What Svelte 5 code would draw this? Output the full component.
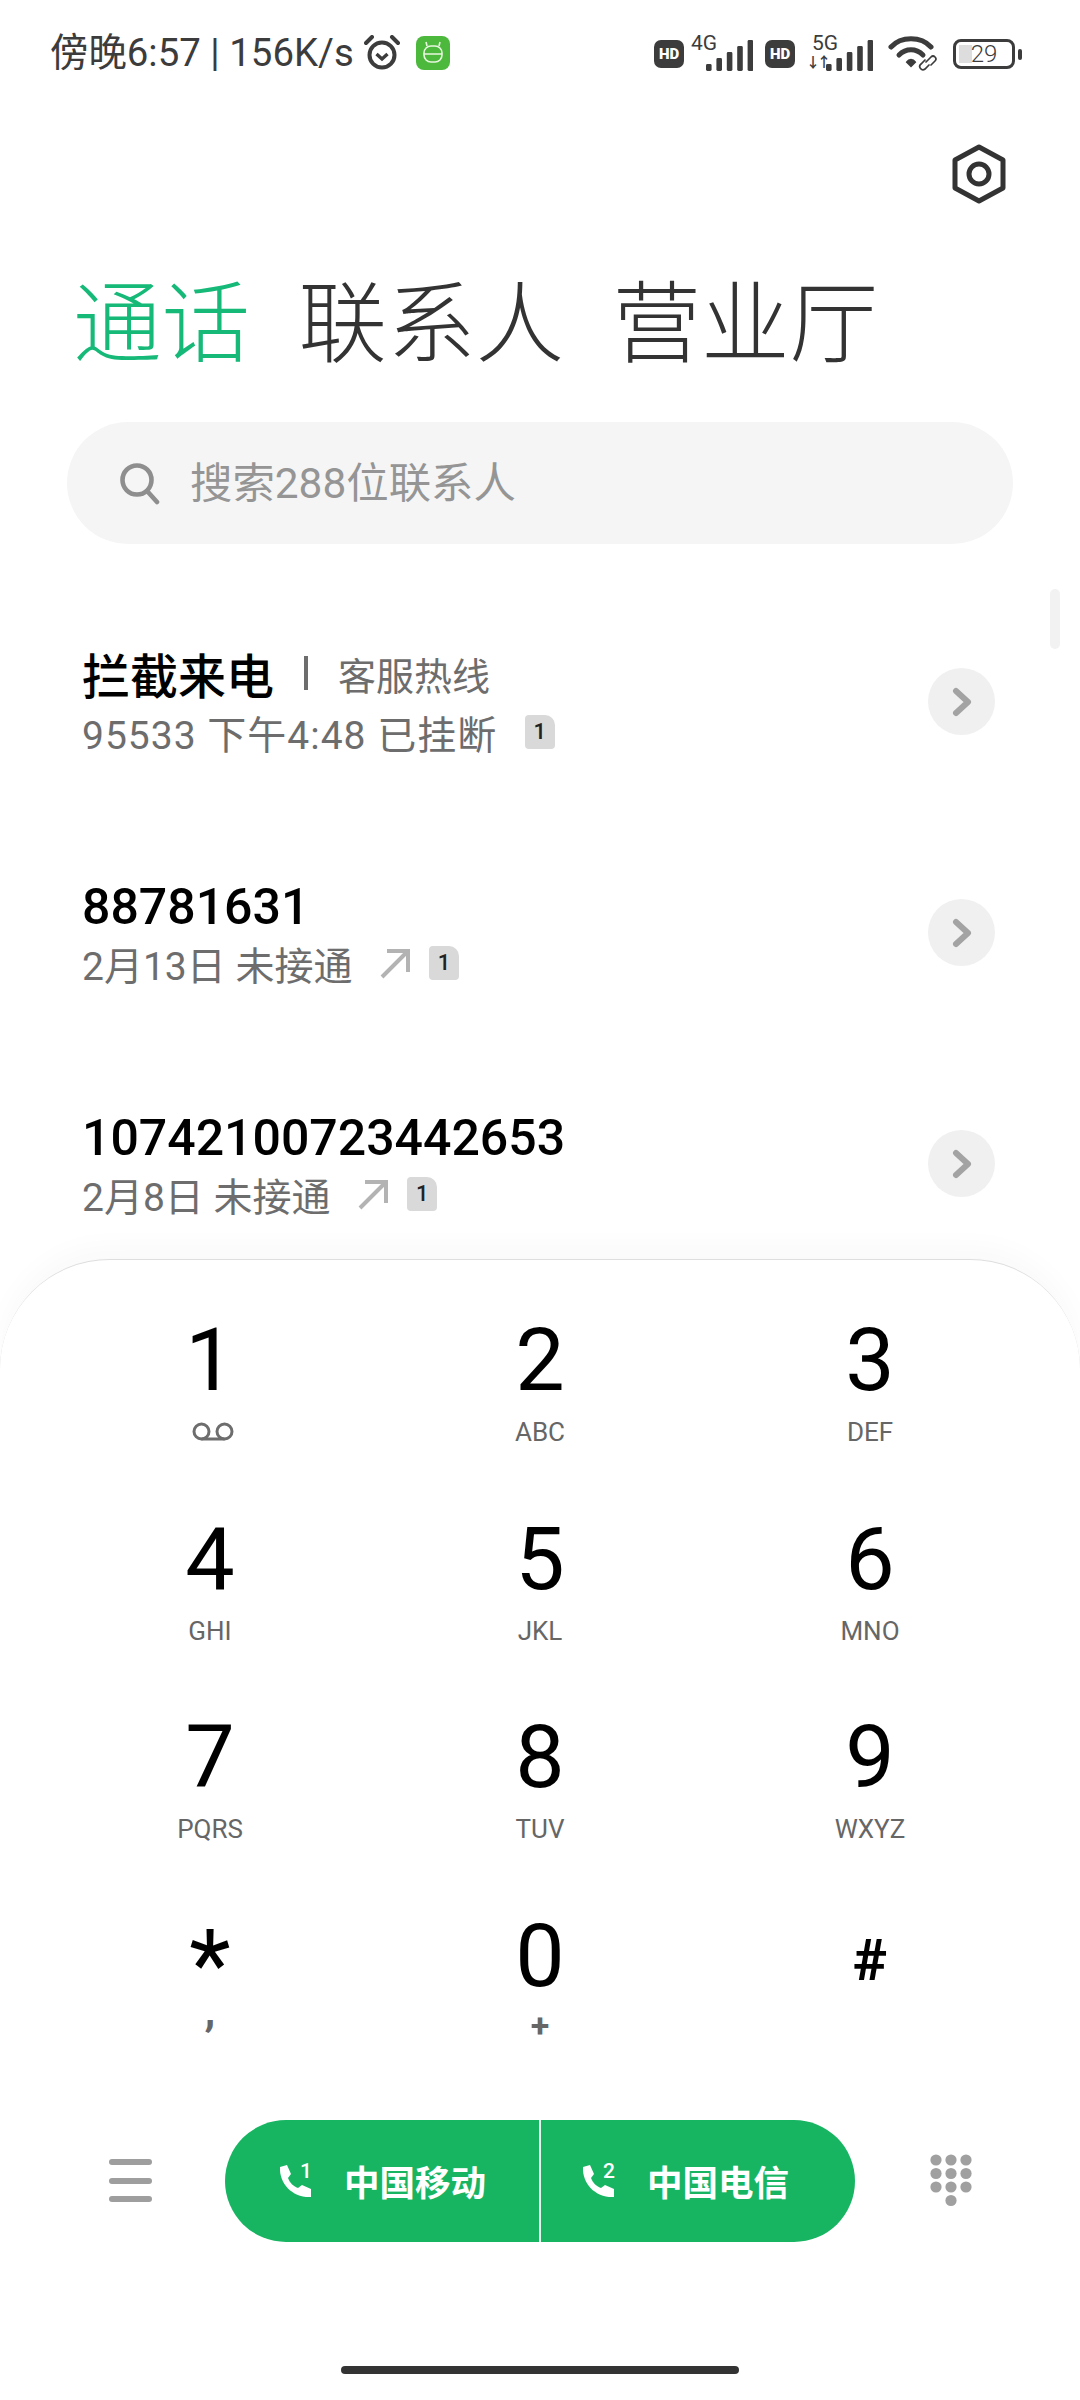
<script>
  const calls = [
    { name: "88781631", date: "2月13日 未接通" },
    { name: "10742100723442653", date: "2月8日 未接通" },
  ];
  const keys = [
    ["1", ""], ["2", "ABC"], ["3", "DEF"],
    ["4", "GHI"], ["5", "JKL"], ["6", "MNO"],
    ["7", "PQRS"], ["8", "TUV"], ["9", "WXYZ"],
  ];
  const signalBars = [0, 1, 2, 3, 4];
</script>

{#snippet sim()}
  <span class="sim">1</span>
{/snippet}

{#snippet chevron()}
  <span class="more">
    <svg width="22" height="30" viewBox="0 0 22 30"><path d="M5 4 L17 15 L5 26" fill="none" stroke="#a3a3a3" stroke-width="6" stroke-linecap="round" stroke-linejoin="round" /></svg>
  </span>
{/snippet}

{#snippet arrow()}
  <svg class="arrow" width="32" height="32" viewBox="0 0 32 32"><path d="M3 30 L29 4 M8 4 H29 V25" fill="none" stroke="#b3b3b3" stroke-width="4" /></svg>
{/snippet}

{#snippet bars()}
  <svg class="bars" width="48" height="32" viewBox="0 0 48 32">
    {#each signalBars as b}
      <rect x={b * 10.4 + 1} y={25 - b * 6} width="5.6" height={7 + b * 6} rx="1.4" fill="#3c3c3c" />
    {/each}
  </svg>
{/snippet}

{#snippet hd()}
  <span class="hd">HD</span>
{/snippet}

{#snippet phone(n)}
  <span class="phone">
    <svg width="34" height="34" viewBox="0 0 34 34"><path d="M2 3 L9 1 L13 10 L10 14 C12 19 15 22 20 24 L24 21 L33 25 L33 33 C15 34 1 20 2 3 Z" fill="#fff" /></svg>
    <span class="sup">{n}</span>
  </span>
{/snippet}

<div class="page">
  <div class="status">
    <div class="status-left">
      <span class="clock">傍晚6:57 | 156K/s</span>
      <svg width="36" height="36" viewBox="0 0 36 36" fill="none" stroke="#3c3c3c" stroke-width="4">
        <circle cx="18" cy="20" r="12.5" />
        <path d="M12.5 19 L18 24 L23.5 19" stroke-width="3.4" />
        <path d="M2 8 L8 2 M34 8 L28 2" stroke-linecap="round" />
      </svg>
      <span class="appicon">
        <svg width="24" height="26" viewBox="0 0 24 26" fill="none" stroke="#e8f6df" stroke-width="1.6">
          <rect x="3" y="6" width="18" height="16" rx="7" />
          <path d="M6 6 L5 2 M18 6 L19 2 M3 14 H21" />
        </svg>
      </span>
    </div>
    <div class="status-right">
      {@render hd()}
      <span class="net"><span class="net-label">4G</span>{@render bars()}</span>
      {@render hd()}
      <span class="net net-5g"><span class="net-label">5G</span><span class="updown">↓↑</span>{@render bars()}</span>
      <svg class="wifi" width="50" height="36" viewBox="0 0 50 36" fill="none" stroke="#3c3c3c" stroke-width="5" stroke-linecap="round">
        <path d="M3 11 C13 0 33 0 43 11" />
        <path d="M11 19 C18 12 28 12 35 19" />
        <path d="M23 30 L19 26 C21 23 25 23 27 26 Z" fill="#3c3c3c" stroke-width="2" />
        <path d="M38 26 L43 21 A2.6 2.6 0 0 1 47 25 L43 29 M37 24 L33 28 A2.6 2.6 0 0 0 37 33 L41 29" stroke-width="1.7" />
      </svg>
      <span class="battery">
        <span class="battery-body"><span class="battery-fill"></span><span class="battery-num">29</span></span>
        <span class="battery-tip"></span>
      </span>
    </div>
  </div>

  <div class="toolbar">
    <svg width="56" height="60" viewBox="0 0 56 60" fill="none" stroke="#333" stroke-width="5" stroke-linejoin="round">
      <path d="M28 3 L52 16 V44 L28 57 L4 44 V16 Z" />
      <circle cx="28" cy="30" r="10" />
    </svg>
  </div>

  <div class="tabs">
    <span class="tab active">通话</span>
    <span class="tab">联系人</span>
    <span class="tab">营业厅</span>
  </div>

  <div class="search">
    <svg width="42" height="44" viewBox="0 0 42 44" fill="none" stroke="#8e8e8e" stroke-width="4.6" stroke-linecap="round">
      <circle cx="18" cy="19" r="14.5" />
      <path d="M29 31 L38 41" />
    </svg>
    <span class="search-text">搜索288位联系人</span>
  </div>

  <div class="list">
    <div class="scroll-thumb"></div>
    <div class="row">
      <div class="row-text">
        <div class="title">
          <b>拦截来电</b><span class="sep"></span><span class="tag">客服热线</span>
        </div>
        <div class="sub wide">95533 下午4:48 已挂断 {@render sim()}</div>
      </div>
      {@render chevron()}
    </div>
    {#each calls as call}
      <div class="row">
        <div class="row-text">
          <div class="title number"><b>{call.name}</b></div>
          <div class="sub">{call.date} {@render arrow()}{@render sim()}</div>
        </div>
        {@render chevron()}
      </div>
    {/each}
  </div>

  <div class="sheet">
    <div class="keypad">
      {#each keys as key}
        <div class="key">
          <div class="digit">{key[0]}</div>
          <div class="letters">
            {#if key[0] === "1"}
              <svg class="voicemail" width="42" height="20" viewBox="0 0 42 20" fill="none" stroke="#6d6d6d" stroke-width="3">
                <circle cx="9.5" cy="9.5" r="7.5" /><circle cx="32.5" cy="9.5" r="7.5" /><path d="M9.5 17 H32.5" />
              </svg>
            {:else}
              {key[1]}
            {/if}
          </div>
        </div>
      {/each}
      <div class="key">
        <div class="digit star">*</div>
        <div class="letters comma">,</div>
      </div>
      <div class="key">
        <div class="digit">0</div>
        <div class="letters plus">+</div>
      </div>
      <div class="key">
        <div class="digit hash">#</div>
        <div class="letters"></div>
      </div>
    </div>

    <div class="actions">
      <div class="side side-left">
        <div class="menu"><i></i><i></i><i></i></div>
      </div>
      <div class="call">
        <div class="call-half">{@render phone(1)}<span>中国移动</span></div>
        <div class="call-half">{@render phone(2)}<span>中国电信</span></div>
      </div>
      <div class="side side-right">
        <svg width="42" height="54" viewBox="0 0 42 54" fill="#a0a0a0">
          {#each [0, 1, 2] as r}
            {#each [0, 1, 2] as c}
              <circle cx={6 + c * 15} cy={6 + r * 13.5} r="5.6" />
            {/each}
          {/each}
          <circle cx="21" cy="46.5" r="5.6" />
        </svg>
      </div>
    </div>

    <div class="home-wrap"><div class="home"></div></div>
  </div>
</div>

<style>
  :global(body) {
    background: #fff;
  }
  .page {
    width: 1080px;
    height: 2400px;
    display: flex;
    flex-direction: column;
    overflow: hidden;
    background: #fff;
    font-family: Roboto, "Noto Sans CJK SC", sans-serif;
  }
  .status {
    height: 106px;
    flex: none;
    display: flex;
    justify-content: space-between;
    align-items: center;
    padding: 0 58px 0 50px;
    box-sizing: border-box;
    color: #3c3c3c;
  }
  .status-left {
    display: flex;
    align-items: center;
    gap: 10px;
  }
  .clock {
    font-size: 38.4px;
    line-height: 44px;
    white-space: nowrap;
  }
  .appicon {
    width: 34px;
    height: 34px;
    margin-left: 6px;
    border-radius: 8px;
    background: #4cb83c;
    display: flex;
    align-items: center;
    justify-content: center;
  }
  .status-right {
    display: flex;
    align-items: center;
    gap: 12px;
    margin-top: 2px;
  }
  .hd {
    width: 30px;
    height: 28px;
    border-radius: 7px;
    background: #3c3c3c;
    color: #fff;
    font-size: 15px;
    font-weight: 900;
    line-height: 28px;
    text-align: center;
  }
  .net {
    display: flex;
    align-items: flex-end;
    position: relative;
    width: 62px;
    height: 34px;
    margin-left: -5px;
    justify-content: flex-end;
  }
  .net-5g {
    width: 66px;
    margin-left: 0;
  }
  .net-label {
    position: absolute;
    left: 0;
    top: -6px;
    font-size: 21px;
    line-height: 24px;
  }
  .net-5g .net-label {
    left: 5px;
  }
  .updown {
    position: absolute;
    left: -1px;
    bottom: 2px;
    font-size: 14px;
    line-height: 14px;
    font-weight: 700;
    letter-spacing: -3px;
  }
  .bars {
    display: block;
  }
  .wifi {
    margin-left: 3px;
  }
  .battery {
    display: flex;
    align-items: center;
    gap: 3px;
    margin-left: 3px;
  }
  .battery-body {
    width: 56px;
    height: 24px;
    border: 3px solid #3c3c3c;
    border-radius: 8px;
    position: relative;
    display: block;
  }
  .battery-fill {
    position: absolute;
    left: 3px;
    top: 3px;
    bottom: 3px;
    width: 13px;
    background: #ddd;
  }
  .battery-num {
    position: absolute;
    inset: 0;
    text-align: center;
    font-size: 24px;
    line-height: 24px;
    font-weight: 300;
  }
  .battery-tip {
    width: 4px;
    height: 11px;
    border-radius: 2px;
    background: #3c3c3c;
  }
  .toolbar {
    flex: none;
    height: 60px;
    margin-top: 38px;
    padding-right: 73px;
    display: flex;
    justify-content: flex-end;
  }
  .tabs {
    flex: none;
    margin-top: 66px;
    padding-left: 73px;
    display: flex;
    gap: 48.5px;
    font-size: 88.5px;
    line-height: 110px;
    font-weight: 300;
    color: #333;
  }
  .tab.active {
    color: #17b978;
  }
  .search {
    flex: none;
    margin: 42px 67px 0;
    height: 122px;
    border-radius: 61px;
    background: #f5f5f5;
    display: flex;
    align-items: center;
    padding-left: 52px;
    gap: 29px;
    font-size: 42.4px;
    color: #959595;
  }
  .search-text {
    padding-bottom: 8px;
  }
  .list {
    flex: 1;
    min-height: 0;
    position: relative;
    padding-top: 93px;
    overflow: hidden;
  }
  .scroll-thumb {
    position: absolute;
    right: 20px;
    top: 45px;
    width: 10px;
    height: 60px;
    border-radius: 5px;
    background: #f2f2f2;
  }
  .row {
    height: 231px;
    display: flex;
    align-items: flex-start;
    justify-content: space-between;
    padding: 0 85px 0 82px;
    box-sizing: border-box;
  }
  .row-text {
    padding-top: 6px;
  }
  .title {
    display: flex;
    align-items: center;
    height: 60px;
    white-space: nowrap;
  }
  .title b {
    font-size: 48px;
    font-weight: 500;
    color: #000;
  }
  .title.number {
    padding-top: 6px;
    box-sizing: border-box;
  }
  .title.number b {
    font-size: 50px;
  }
  .sep {
    width: 4px;
    height: 34px;
    margin: 0 30px;
    background: #6d6d6d;
  }
  .tag {
    font-size: 38px;
    color: #6d6d6d;
  }
  .sub {
    display: flex;
    align-items: center;
    height: 58px;
    font-size: 39px;
    color: #6d6d6d;
    white-space: pre;
  }
  .sub.wide {
    letter-spacing: 1px;
  }
  .arrow {
    margin-left: 17px;
    margin-right: 18px;
  }
  .sim {
    width: 30px;
    height: 34px;
    margin-left: 17px;
    background: #d9d9d9;
    border-radius: 4px 10px 4px 4px;
    color: #222;
    font-size: 22px;
    font-weight: 500;
    line-height: 34px;
    letter-spacing: 0;
    text-align: center;
  }
  :global(.arrow) + .sim {
    margin-left: 0;
  }
  .more {
    width: 67px;
    height: 67px;
    margin-top: 31px;
    border-radius: 50%;
    background: #f0f0f0;
    display: flex;
    align-items: center;
    justify-content: center;
  }
  .sheet {
    flex: none;
    height: 1141px;
    box-sizing: border-box;
    border-top: 1.5px solid #dedede;
    border-radius: 110px 110px 0 0;
    background: #fff;
    box-shadow: 0 -14px 26px rgba(0, 0, 0, 0.025);
    position: relative;
    display: flex;
    flex-direction: column;
  }
  .keypad {
    display: grid;
    grid-template-columns: repeat(3, 330px);
    justify-content: center;
    padding-top: 50px;
    grid-auto-rows: 198.7px;
  }
  .key {
    display: flex;
    flex-direction: column;
    align-items: center;
  }
  .digit {
    height: 100px;
    font-size: 88px;
    font-weight: 400;
    line-height: 100px;
    color: #000;
  }
  .digit.star {
    box-sizing: border-box;
    padding-top: 26px;
    font-size: 96px;
    line-height: 66px;
  }
  .digit.hash {
    box-sizing: border-box;
    padding-top: 10px;
    font-size: 58px;
    font-weight: 700;
    line-height: 88px;
  }
  .letters {
    height: 36px;
    margin-top: 4px;
    font-size: 26px;
    line-height: 36px;
    color: #666;
    display: flex;
    align-items: center;
  }
  .voicemail {
    margin-left: 6px;
  }
  .comma {
    align-items: flex-start;
    margin-top: 0;
    font-size: 44px;
    font-weight: 700;
    line-height: 8px;
  }
  .plus {
    margin-top: 1px;
    font-size: 34px;
    font-weight: 700;
  }
  .actions {
    margin-top: 15px;
    height: 122px;
    display: flex;
    align-items: center;
  }
  .side {
    width: 225px;
    box-sizing: border-box;
    display: flex;
  }
  .side-left {
    justify-content: flex-end;
    padding-right: 73px;
  }
  .side-right {
    padding-left: 75px;
  }
  .menu {
    display: flex;
    flex-direction: column;
    gap: 12.5px;
  }
  .menu i {
    display: block;
    width: 43px;
    height: 6px;
    border-radius: 3px;
    background: #9e9e9e;
  }
  .call {
    width: 630px;
    height: 122px;
    border-radius: 61px;
    background: #17b562;
    display: flex;
    overflow: hidden;
  }
  .call-half {
    flex: 0 0 314px;
    box-sizing: border-box;
    display: flex;
    align-items: center;
    justify-content: center;
    gap: 32px;
    color: #fff;
    font-size: 35.5px;
    font-weight: 700;
  }
  .call-half + .call-half {
    flex: 0 0 316px;
    border-left: 2px solid #e6f7ee;
    padding-right: 26px;
  }
  .phone {
    position: relative;
    width: 34px;
    height: 34px;
    display: block;
  }
  .phone svg {
    display: block;
  }
  .sup {
    position: absolute;
    right: 0;
    top: -5px;
    font-size: 21px;
    line-height: 24px;
    font-weight: 500;
  }
  .home-wrap {
    flex: 1;
    display: flex;
    align-items: flex-end;
    justify-content: center;
    padding-bottom: 26px;
  }
  .home {
    width: 398px;
    height: 8px;
    border-radius: 4px;
    background: #333;
  }
</style>
